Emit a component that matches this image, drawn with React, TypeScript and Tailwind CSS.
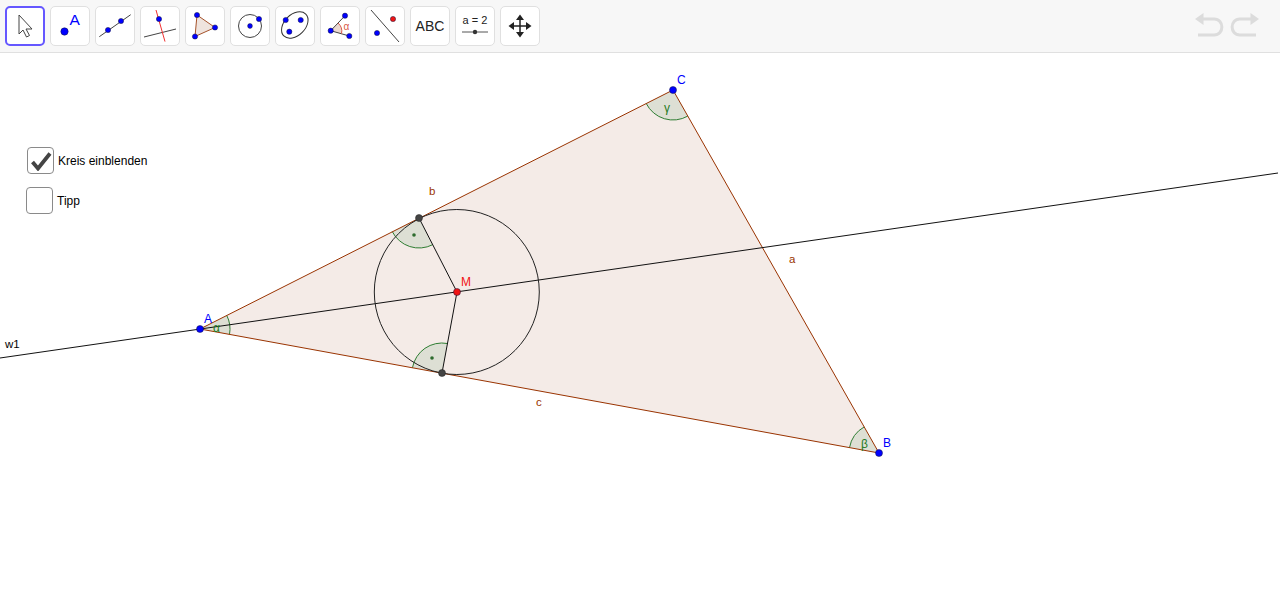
import React from "react";

type P = [number, number];
const A: P = [200, 329];
const B: P = [879, 453];
const C: P = [673, 90];
const M: P = [457, 292];
const F1: P = [419, 218];
const F2: P = [442, 373];

function toward(o: P, t: P, r: number): P {
  const dx = t[0] - o[0];
  const dy = t[1] - o[1];
  const l = Math.hypot(dx, dy);
  return [o[0] + (dx / l) * r, o[1] + (dy / l) * r];
}

function Wedge({ o, from, to, r }: { o: P; from: P; to: P; r: number }) {
  const a = toward(o, from, r);
  const b = toward(o, to, r);
  return (
    <path
      d={`M${o[0]} ${o[1]}L${a[0]} ${a[1]}A${r} ${r} 0 0 1 ${b[0]} ${b[1]}Z`}
      fill="#dddfd4"
      stroke="none"
    />
  );
}

function WedgeArc({ o, from, to, r }: { o: P; from: P; to: P; r: number }) {
  const a = toward(o, from, r);
  const b = toward(o, to, r);
  return (
    <path
      d={`M${a[0]} ${a[1]}A${r} ${r} 0 0 1 ${b[0]} ${b[1]}`}
      fill="none"
      stroke="#2e7d32"
      strokeWidth="1"
    />
  );
}

const blue = "#0000ff";
const dot = (cx: number, cy: number, r = 3.5, fill = blue) => (
  <circle cx={cx} cy={cy} r={r} fill={fill} stroke="#14143c" strokeWidth="0.5" />
);

function ToolButton({ children, active }: { children: React.ReactNode; active?: boolean }) {
  return (
    <div
      className={
        active
          ? "w-10 h-10 shrink-0 rounded-[5px] bg-white border-2 border-[#6557ff]"
          : "w-10 h-10 shrink-0 rounded-[5px] bg-white border border-[#e0e0e0]"
      }
    >
      {children}
    </div>
  );
}

function Ico({ children, active }: { children: React.ReactNode; active?: boolean }) {
  return (
    <svg
      width={active ? 36 : 38}
      height={active ? 36 : 38}
      viewBox={active ? "1 1 36 36" : "0 0 38 38"}
      className="block"
    >
      {children}
    </svg>
  );
}

const textFont = { fontFamily: "Liberation Sans, Arial, sans-serif" };
const edge = "#993300";
const green = "#1f7a1f";

export default function App() {
  return (
    <div className="w-[1280px] h-[600px] bg-white overflow-hidden relative font-['Liberation_Sans',Arial,sans-serif]">
      <div className="h-[53px] bg-[#f7f7f7] border-b border-[#e0e0e0] flex items-start justify-between pt-[6px] pl-[5px] pr-[20px]">
        <div className="flex gap-[5px]">
          <ToolButton active>
            <Ico active>
              <path d="M13 8V27l4-4 3.5 7 3-1.5-3.5-6.5h6Z" fill="#fff" stroke="#444" strokeWidth="1" strokeLinejoin="round" />
            </Ico>
          </ToolButton>
          <ToolButton>
            <Ico>
              {dot(13.5, 24.5, 3.7)}
              <text x="18.5" y="18" fontSize="15.5" fill={blue} style={textFont}>A</text>
            </Ico>
          </ToolButton>
          <ToolButton>
            <Ico>
              <line x1="3.3" y1="29.7" x2="34.7" y2="7.7" stroke="#444" strokeWidth="1" />
              {dot(12, 23, 2.6)}
              {dot(25, 14, 2.6)}
            </Ico>
          </ToolButton>
          <ToolButton>
            <Ico>
              <line x1="3" y1="30" x2="35" y2="22" stroke="#444" strokeWidth="1" />
              <line x1="15" y1="3" x2="24" y2="34.6" stroke="#f03030" strokeWidth="1" />
              {dot(18, 12, 2.6)}
            </Ico>
          </ToolButton>
          <ToolButton>
            <Ico>
              <path d="M11 8 29 20.5 9 29.5Z" fill="#efe4de" stroke="#a5522a" strokeWidth="1" />
              {dot(11, 8, 2.6)}
              {dot(29, 20.5, 2.6)}
              {dot(9, 29.5, 2.6)}
            </Ico>
          </ToolButton>
          <ToolButton>
            <Ico>
              <circle cx="19" cy="19" r="11.5" fill="none" stroke="#444" strokeWidth="1" />
              {dot(19, 19, 2.4)}
              {dot(28, 12, 2.6)}
            </Ico>
          </ToolButton>
          <ToolButton>
            <Ico>
              <ellipse cx="18.8" cy="18" rx="15.5" ry="10.5" transform="rotate(-45 18.8 18)" fill="none" stroke="#333" strokeWidth="1" />
              {dot(9.7, 13, 2.6)}
              {dot(24.7, 13, 2.6)}
              {dot(13.3, 24.7, 2.6)}
            </Ico>
          </ToolButton>
          <ToolButton>
            <Ico>
              <path d="M9.7 23.7 17 16 A11 11 0 0 1 20.5 26.7Z" fill="#ecd9d0" />
              <line x1="9.7" y1="23.7" x2="24" y2="8.7" stroke="#444" strokeWidth="1" />
              <line x1="9.7" y1="23.7" x2="28.3" y2="29" stroke="#444" strokeWidth="1" />
              <path d="M17 16 A11 11 0 0 1 20.5 26.7" fill="none" stroke="#d9584a" strokeWidth="1" />
              {dot(9.7, 23.7, 2.6)}
              {dot(24, 8.7, 2.6)}
              {dot(28.3, 29, 2.6)}
              <text x="22.5" y="22.5" fontSize="10" fill="#d9584a" style={textFont}>α</text>
            </Ico>
          </ToolButton>
          <ToolButton>
            <Ico>
              <line x1="5" y1="3" x2="33" y2="35" stroke="#444" strokeWidth="1" />
              {dot(27, 12, 2.6, "#f01414")}
              {dot(11, 26, 2.6)}
            </Ico>
          </ToolButton>
          <ToolButton>
            <div className="h-full flex items-center justify-center text-[14px] leading-none text-[#222]">ABC</div>
          </ToolButton>
          <ToolButton>
            <Ico>
              <text x="19" y="16.5" fontSize="11" textAnchor="middle" fill="#222" style={textFont}>a = 2</text>
              <line x1="6" y1="25" x2="32" y2="25" stroke="#555" strokeWidth="1" />
              <circle cx="19" cy="25" r="2.2" fill="#333" />
            </Ico>
          </ToolButton>
          <ToolButton>
            <Ico>
              <path d="M19 10V28M10 19H28" stroke="#222" strokeWidth="1.5" />
              <path d="M19 7.5 23 13H15ZM19 30.5 15 25H23ZM7.5 19 13 15V23ZM30.5 19 25 23V15Z" fill="#222" />
            </Ico>
          </ToolButton>
        </div>
        <div className="flex gap-[6px] pt-[6px]">
          <svg width="30" height="26" viewBox="0 0 30 26" className="block">
            <path d="M4 7H20C30.5 7 30.5 23 20 23H4" fill="none" stroke="#dcdcdc" strokeWidth="3" />
            <path d="M1 7 9.5 1V13Z" fill="#dcdcdc" />
          </svg>
          <svg width="30" height="26" viewBox="0 0 30 26" className="block">
            <path d="M26 7H10C-0.5 7 -0.5 23 10 23H26" fill="none" stroke="#dcdcdc" strokeWidth="3" />
            <path d="M29 7 20.5 1V13Z" fill="#dcdcdc" />
          </svg>
        </div>
      </div>

      <svg width="1280" height="547" viewBox="0 53 1280 547" className="block">
        <polygon points={`${A} ${B} ${C}`} fill="#f4ebe7" />
        <Wedge o={A} from={C} to={B} r={30} />
        <Wedge o={B} from={A} to={C} r={30} />
        <Wedge o={C} from={B} to={A} r={30} />
        <Wedge o={F1} from={M} to={A} r={30} />
        <Wedge o={F2} from={A} to={M} r={30} />
        <WedgeArc o={A} from={C} to={B} r={30} />
        <WedgeArc o={B} from={A} to={C} r={30} />
        <WedgeArc o={C} from={B} to={A} r={30} />
        <WedgeArc o={F1} from={M} to={A} r={30} />
        <WedgeArc o={F2} from={A} to={M} r={30} />
        <polygon points={`${A} ${B} ${C}`} fill="none" stroke={edge} strokeWidth="1" />
        <line x1="0" y1="358" x2="1278" y2="173" stroke="#111" strokeWidth="1" />
        <circle cx="456.8" cy={M[1]} r="82.5" fill="none" stroke="#222" strokeWidth="1" />
        <line x1={F1[0]} y1={F1[1]} x2={M[0]} y2={M[1]} stroke="#111" strokeWidth="1" />
        <line x1={F2[0]} y1={F2[1]} x2={M[0]} y2={M[1]} stroke="#111" strokeWidth="1" />
        <circle cx="414" cy="235" r="1.8" fill="#2e6b2e" />
        <circle cx="432" cy="358" r="1.8" fill="#2e6b2e" />
        <circle cx={F1[0]} cy={F1[1]} r="3.5" fill="#444" stroke="#222" strokeWidth="0.5" />
        <circle cx={F2[0]} cy={F2[1]} r="3.5" fill="#444" stroke="#222" strokeWidth="0.5" />
        {dot(A[0], A[1])}
        {dot(B[0], B[1])}
        {dot(C[0], C[1])}
        {dot(M[0], M[1], 3.5, "#f01414")}
        <g fontSize="11.5" style={textFont}>
          <text x="204" y="323" fill={blue} fontSize="12">A</text>
          <text x="883" y="447" fill={blue} fontSize="12">B</text>
          <text x="677" y="84" fill={blue} fontSize="12">C</text>
          <text x="461" y="286" fill="#f01414" fontSize="12">M</text>
          <text x="429" y="195" fill={edge}>b</text>
          <text x="789" y="263" fill={edge}>a</text>
          <text x="536" y="406" fill={edge}>c</text>
          <text x="5" y="348" fill="#000">w1</text>
          <text x="213" y="332" fill={green} fontSize="12">α</text>
          <text x="861" y="448" fill={green} fontSize="12">β</text>
          <text x="664" y="112" fill={green} fontSize="12">γ</text>
        </g>
      </svg>

      <label className="absolute left-[27px] top-[147px] flex items-center gap-[4px]">
        <span className="w-[27px] h-[27px] rounded-[4px] bg-white border-[1.5px] border-[#8a8a8a] flex items-center justify-center">
          <svg width="22" height="20" viewBox="0 0 22 20" className="block">
            <path d="M2.5 11 8 17.5 20 2.5" fill="none" stroke="#444" strokeWidth="3.8" />
          </svg>
        </span>
        <span className="text-[12px] text-black">Kreis einblenden</span>
      </label>
      <label className="absolute left-[26px] top-[187px] flex items-center gap-[4px]">
        <span className="w-[27px] h-[27px] rounded-[4px] bg-white border-[1.5px] border-[#8a8a8a]" />
        <span className="text-[12px] text-black">Tipp</span>
      </label>
    </div>
  );
}
